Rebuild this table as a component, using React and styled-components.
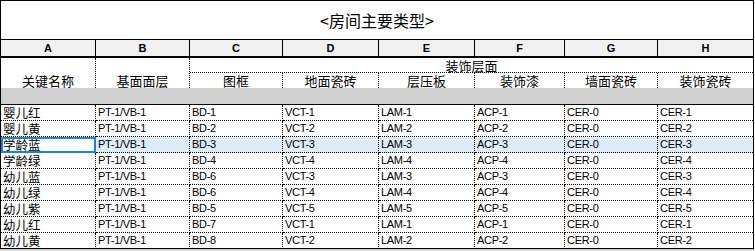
import React from 'react';
import styled, { createGlobalStyle, css } from 'styled-components';

const GlobalStyle = createGlobalStyle`
    html, body {
        margin: 0;
        padding: 0;
        background: #ffffff;
    }
    body {
        font-family: "Liberation Sans", Arial, sans-serif;
        color: #000;
    }
`

const cjk = `"Noto Sans CJK SC", "Liberation Sans", sans-serif`;

const Frame = styled.div`
    width: 754px;
    height: 249px;
    box-sizing: border-box;
    border: 1px solid #000;
    overflow: hidden;
    display: grid;
    grid-template-columns: 95px 94px 93px 96px 96px 90px 93px 95px;
    grid-template-rows: 39px 18px 15px 15px 17px;
    grid-auto-rows: 16px;
`
const Title = styled.div`
    grid-column: 1 / -1;
    box-sizing: border-box;
    border-bottom: 1px solid #000;
    display: flex;
    align-items: center;
    justify-content: center;
    font-family: ${cjk};
    font-size: 16px;
`
const Letter = styled.div`
    box-sizing: border-box;
    background: #f0f0f0;
    border-bottom: 2px solid #000;
    border-right: ${p => (p.$last ? 'none' : '1px solid #000')};
    font-size: 11px;
    font-weight: bold;
    line-height: 16px;
    text-align: center;
`
const HeadCell = styled.div`
    grid-row: span 2;
    box-sizing: border-box;
    border-right: 1px dotted #000;
    display: flex;
    align-items: flex-end;
    justify-content: center;
    font-family: ${cjk};
    font-size: 13px;
    line-height: 15px;
`
const GroupCell = styled.div`
    grid-column: 3 / -1;
    box-sizing: border-box;
    border-bottom: 1px dotted #000;
    display: flex;
    align-items: center;
    justify-content: center;
    font-family: ${cjk};
    font-size: 13px;
    line-height: 13px;
`
const SubCell = styled.div`
    box-sizing: border-box;
    border-right: ${p => (p.$last ? 'none' : '1px dotted #000')};
    display: flex;
    align-items: center;
    justify-content: center;
    font-family: ${cjk};
    font-size: 13px;
    line-height: 13px;
`
const Band = styled.div`
    grid-column: 1 / -1;
    box-sizing: border-box;
    background: #d0d0d0;
    border-bottom: 1px solid #000;
`
const Cell = styled.div`
    box-sizing: border-box;
    border-right: ${p => (p.$last ? 'none' : '1px dotted #000')};
    border-bottom: 1px dotted #000;
    padding-left: 2px;
    display: flex;
    align-items: center;
    white-space: nowrap;
    background: ${p => (p.$selected ? '#dcecf8' : '#fff')};
    ${p => p.$cjk ? css`
        font-family: ${cjk};
        font-size: 12.5px;
        line-height: 13px;
    ` : css`
        font-size: 11px;
        line-height: 13px;
        letter-spacing: -0.3px;
    `}
    ${p => p.$active && css`
        background: #fff;
        outline: 2px solid #1289d6;
        outline-offset: -2px;
    `}
`
const Footer = styled.div`
    width: 755px;
    height: 2px;
    background: #d6d6d6;
`

const letters = ['A', 'B', 'C', 'D', 'E', 'F', 'G', 'H'];
const subs = ['图框', '地面瓷砖', '层压板', '装饰漆', '墙面瓷砖', '装饰瓷砖'];

const rows = [
    ['婴儿红', 'PT-1/VB-1', 'BD-1', 'VCT-1', 'LAM-1', 'ACP-1', 'CER-0', 'CER-1'],
    ['婴儿黄', 'PT-1/VB-1', 'BD-2', 'VCT-2', 'LAM-2', 'ACP-2', 'CER-0', 'CER-2'],
    ['学龄蓝', 'PT-1/VB-1', 'BD-3', 'VCT-3', 'LAM-3', 'ACP-3', 'CER-0', 'CER-3'],
    ['学龄绿', 'PT-1/VB-1', 'BD-4', 'VCT-4', 'LAM-4', 'ACP-4', 'CER-0', 'CER-4'],
    ['幼儿蓝', 'PT-1/VB-1', 'BD-6', 'VCT-3', 'LAM-3', 'ACP-3', 'CER-0', 'CER-3'],
    ['幼儿绿', 'PT-1/VB-1', 'BD-6', 'VCT-4', 'LAM-4', 'ACP-4', 'CER-0', 'CER-4'],
    ['幼儿紫', 'PT-1/VB-1', 'BD-5', 'VCT-5', 'LAM-5', 'ACP-5', 'CER-0', 'CER-5'],
    ['幼儿红', 'PT-1/VB-1', 'BD-7', 'VCT-1', 'LAM-1', 'ACP-1', 'CER-0', 'CER-1'],
    ['幼儿黄', 'PT-1/VB-1', 'BD-8', 'VCT-2', 'LAM-2', 'ACP-2', 'CER-0', 'CER-2'],
];

const selectedRow = 2;

const App = () => {
    return (
        <>
            <GlobalStyle />
            <Frame>
                <Title>&lt;房间主要类型&gt;</Title>
                {letters.map((l, i) => (
                    <Letter key={l} $last={i === letters.length - 1}>{l}</Letter>
                ))}
                <HeadCell>关键名称</HeadCell>
                <HeadCell>基面面层</HeadCell>
                <GroupCell>装饰层面</GroupCell>
                {subs.map((s, i) => (
                    <SubCell key={s} $last={i === subs.length - 1}>{s}</SubCell>
                ))}
                <Band />
                {rows.map((row, r) =>
                    row.map((v, c) => (
                        <Cell
                            key={r + '-' + c}
                            $cjk={c === 0}
                            $last={c === row.length - 1}
                            $selected={r === selectedRow}
                            $active={r === selectedRow && c === 0}
                        >
                            {v}
                        </Cell>
                    ))
                )}
            </Frame>
            <Footer />
        </>
    )
}

export default App
